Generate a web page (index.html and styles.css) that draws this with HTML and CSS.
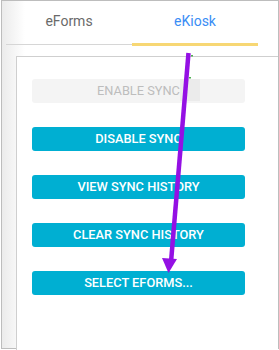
FILE: index.html
```html
<!DOCTYPE html>
<html>
<head>
<meta charset="utf-8">
<link rel="stylesheet" href="styles.css">
</head>
<body>
<div class="frame">
  <div class="tabs">
    <div class="tab">eForms</div>
    <div class="tab active">eKiosk</div>
  </div>
  <div class="panel">
    <button class="btn disabled">ENABLE SYNC</button>
    <button class="btn">DISABLE SYNC</button>
    <button class="btn">VIEW SYNC HISTORY</button>
    <button class="btn">CLEAR SYNC HISTORY</button>
    <button class="btn">SELECT EFORMS...</button>
  </div>
</div>
<svg class="annot" width="279" height="350" viewBox="0 0 279 350">
  <rect x="180" y="79" width="20" height="22" fill="#ebebeb"/>
  <line x1="188.5" y1="53" x2="171" y2="262" stroke="#9410e4" stroke-width="4.5" stroke-linecap="butt"/>
  <polygon points="162,258 177,259 168.5,273" fill="#9410e4"/>
  <rect x="191" y="55" width="2" height="1.5" fill="#4caf50"/>
  <rect x="189" y="77" width="2" height="1.5" fill="#4caf50"/>
</svg>
</body>
</html>
```
FILE: styles.css
```css
html, body {
  margin: 0;
  padding: 0;
  background: #fff;
}
body {
  width: 279px;
  height: 350px;
  overflow: hidden;
  position: relative;
  font-family: Roboto, "Liberation Sans", sans-serif;
}
.frame {
  margin-left: 1px;
  width: 278px;
  height: 349px;
  box-sizing: border-box;
  border: 1px solid #bdbdbd;
  background: linear-gradient(to right, #ebebeb 0, #fff 23px);
  overflow: visible;
}
.tabs {
  display: flex;
  align-items: flex-start;
  margin-left: 4px;
  width: 252px;
  height: 44px;
  box-sizing: border-box;
  border-bottom: 1px solid #d6d6d6;
}
.tab {
  flex: 1;
  height: 45px;
  line-height: 40px;
  text-align: center;
  font-size: 14px;
  color: #6a6a6a;
  box-sizing: border-box;
}
.tab.active {
  color: #3a8df5;
  box-shadow: inset 0 -3px 0 #f7d774;
}
.panel {
  margin-top: 11px;
  margin-left: 14px;
  height: 300px;
  box-sizing: border-box;
  border-top: 1px solid #cfcfcf;
  border-left: 1px solid #cfcfcf;
  background: #fff;
  padding: 22px 0 0 15px;
  display: flex;
  flex-direction: column;
  gap: 24px;
}
.btn {
  width: 213px;
  height: 24px;
  border: none;
  border-radius: 3px;
  background: #00afd2;
  color: #fff;
  font-family: Roboto, "Liberation Sans", sans-serif;
  font-weight: 500;
  font-size: 12.8px;
  padding: 0;
  line-height: 24px;
  text-align: center;
}
.btn.disabled {
  background: #f4f4f4;
  color: #bdbdbd;
  font-weight: 400;
}
.annot {
  position: absolute;
  left: 0;
  top: 0;
  pointer-events: none;
}
```
